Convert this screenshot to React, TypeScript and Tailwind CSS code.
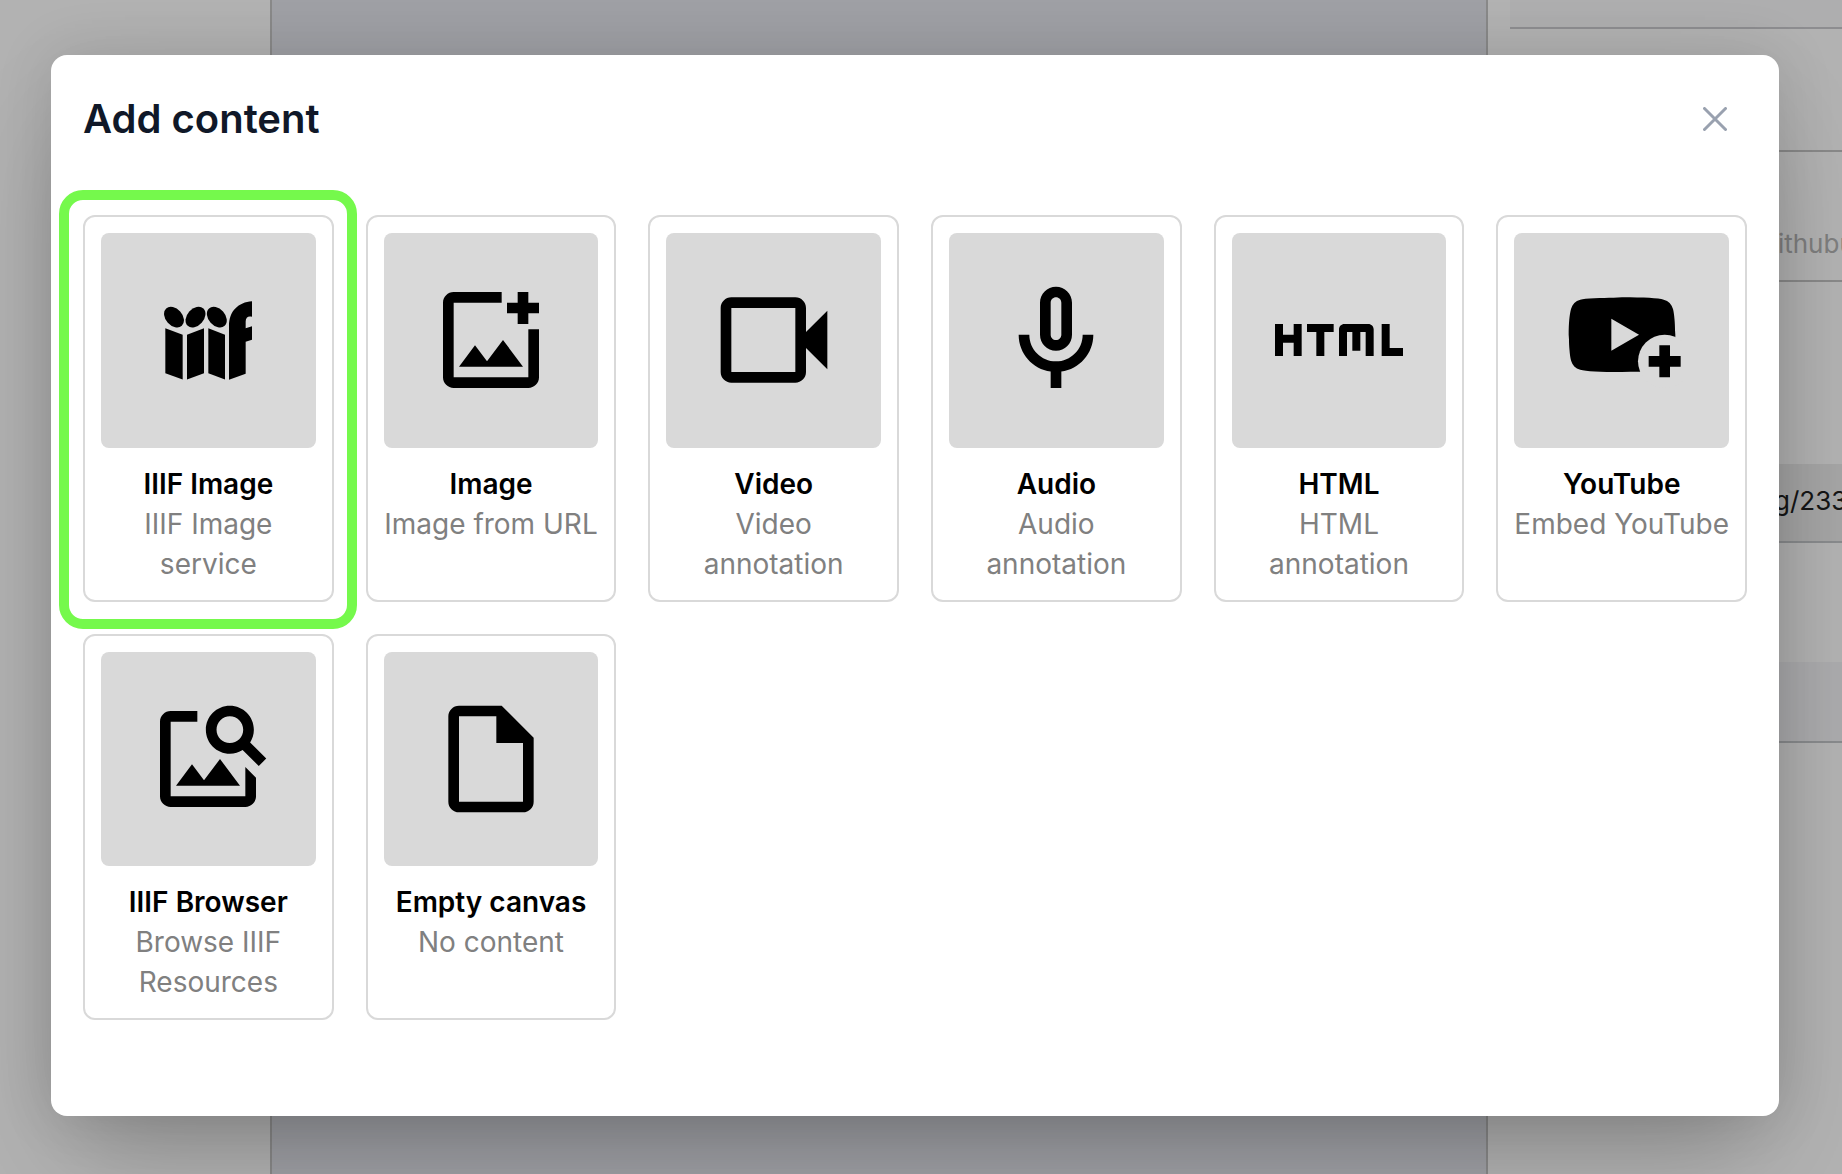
import type { ReactNode } from "react";
import { MdHtml } from "react-icons/md";

function Glyph({ children }: { children: ReactNode }) {
  return (
    <svg viewBox="0 0 24 24" className="size-32" fill="currentColor" fillRule="evenodd" aria-hidden="true">
      {children}
    </svg>
  );
}

function IiifLogo() {
  return (
    <svg viewBox="222 245 264 236" className="h-[79px] w-[88px]" fill="currentColor" aria-hidden="true">
      <ellipse cx="252" cy="293" rx="35" ry="25" transform="rotate(48 252 293)" />
      <ellipse cx="316.500" cy="293" rx="35" ry="25" transform="rotate(-48 316.500 293)" />
      <ellipse cx="380.500" cy="293" rx="35" ry="25" transform="rotate(48 380.500 293)" />
      <path d="M226 326l52 20v134l-52-19z" />
      <path d="M342 326l-51 20v134l51-19z" />
      <path d="M355 326l50 20v134l-50-19z" />
      <path d="M486 245v47c-11-4-19 2-19 14v20l19-6v41l-19 6v96l-50 18V320c0-46 28-72 69-75z" />
    </svg>
  );
}

function AddImageIcon() {
  return (
    <Glyph>
      <path d="M5 3h9v2H5v14h14v-9h2v9c0 1.100-.9 2-2 2H5c-1.100 0-2-.9-2-2V5c0-1.100.9-2 2-2z" />
      <path d="M17 3h2v2h2v2h-2v2h-2V7h-2V5h2zM9 13l2.250 3 3-4L18 17H6z" />
    </Glyph>
  );
}

function VideoIcon() {
  return (
    <Glyph>
      <path d="M4 4h12c1.100 0 2 .9 2 2v4.500l4-4v11l-4-4V18c0 1.100-.9 2-2 2H4c-1.100 0-2-.9-2-2V6c0-1.100.9-2 2-2zm0 2v12h12V6z" />
    </Glyph>
  );
}

function MicIcon() {
  return (
    <Glyph>
      <path d="M12 2c1.660 0 3 1.340 3 3v6c0 1.660-1.340 3-3 3s-3-1.340-3-3V5c0-1.660 1.340-3 3-3zm0 2c-.55 0-1 .45-1 1v6c0 .55.45 1 1 1s1-.45 1-1V5c0-.55-.45-1-1-1z" />
      <path d="M17 11c0 2.760-2.240 5-5 5s-5-2.240-5-5H5c0 3.530 2.610 6.430 6 6.920V21h2v-3.080c3.390-.49 6-3.390 6-6.920z" />
    </Glyph>
  );
}

function YouTubeAddIcon() {
  return (
    <Glyph>
      <path
        transform="translate(0 -1)"
        d="M10,15L15.190,12L10,9V15M21.560,7.170C21.690,7.640 21.780,8.270 21.840,9.070C21.910,9.870 21.940,10.560 21.940,11.160L22,12C22,14.190 21.840,15.800 21.560,16.830C21.310,17.730 20.730,18.310 19.830,18.560C19.360,18.690 18.500,18.780 17.180,18.840C15.880,18.910 14.690,18.940 13.590,18.940L12,19C7.810,19 5.200,18.840 4.170,18.560C3.270,18.310 2.690,17.730 2.440,16.830C2.310,16.360 2.220,15.730 2.160,14.930C2.090,14.130 2.060,13.440 2.060,12.840L2,12C2,9.810 2.160,8.200 2.440,7.170C2.690,6.270 3.270,5.690 4.170,5.440C4.640,5.310 5.500,5.220 6.820,5.160C8.120,5.090 9.310,5.060 10.410,5.060L12,5C16.190,5 18.800,5.160 19.830,5.440C20.730,5.690 21.310,6.270 21.560,7.170Z"
      />
      <circle cx="20" cy="16" r="5" className="fill-[#d9d9d9]" />
      <path d="M19 13h2v2h2v2h-2v2h-2v-2h-2v-2h2z" />
    </Glyph>
  );
}

function SearchImageIcon() {
  return (
    <Glyph>
      <path d="M5 3h5v2H5v14h14v-5.500l2 2V19c0 1.100-.9 2-2 2H5c-1.100 0-2-.9-2-2V5c0-1.100.9-2 2-2z" />
      <path d="M9 13l2.250 3 3-4L18 17H6z" />
      <path d="M19.900 8.890c.44-.7.7-1.510.7-2.390C20.600 4.010 18.590 2 16.100 2s-4.500 2.010-4.500 4.500S13.610 11 16.100 11c.88 0 1.700-.26 2.390-.7l3.030 3.020 1.400-1.420zM16.100 9c-1.380 0-2.500-1.120-2.500-2.500S14.720 4 16.100 4s2.500 1.120 2.500 2.500S17.480 9 16.100 9z" />
    </Glyph>
  );
}

function FileIcon() {
  return (
    <Glyph>
      <path d="M6 2h8l6 6v12c0 1.100-.9 2-2 2H6c-1.100 0-2-.9-2-2V4c0-1.100.9-2 2-2zm0 2v16h12V9h-5V4z" />
    </Glyph>
  );
}

type Item = { title: string; detail: string; icon: ReactNode; highlighted?: boolean };

const items: Item[] = [
  { title: "IIIF Image", detail: "IIIF Image service", icon: <IiifLogo />, highlighted: true },
  { title: "Image", detail: "Image from URL", icon: <AddImageIcon /> },
  { title: "Video", detail: "Video annotation", icon: <VideoIcon /> },
  { title: "Audio", detail: "Audio annotation", icon: <MicIcon /> },
  { title: "HTML", detail: "HTML annotation", icon: <MdHtml className="size-32" aria-hidden="true" /> },
  { title: "YouTube", detail: "Embed YouTube", icon: <YouTubeAddIcon /> },
  { title: "IIIF Browser", detail: "Browse IIIF Resources", icon: <SearchImageIcon /> },
  { title: "Empty canvas", detail: "No content", icon: <FileIcon /> },
];

function ContentCard({ title, detail, icon, highlighted }: Item) {
  return (
    <button type="button" className="relative flex flex-col rounded-xl border-2 border-[#d9d9d9] p-4 text-center text-[28px] leading-10">
      <span className="mb-4 flex aspect-square w-full items-center justify-center rounded-lg bg-[#d9d9d9] text-black">{icon}</span>
      <span className="w-full font-semibold text-black">{title}</span>
      <span className="w-full text-[#808080]">{detail}</span>
      {highlighted && (
        <span className="pointer-events-none absolute -top-[27px] -right-[25px] -bottom-[29px] -left-[26px] rounded-3xl border-[10px] border-[#75f94c]" />
      )}
    </button>
  );
}

function Workspace() {
  return (
    <div className="absolute inset-0 flex overflow-hidden bg-white" aria-hidden="true">
      <div className="w-[270px] shrink-0" />
      <div className="flex-1 border-x-2 border-[#c4c4c4] bg-[#e4e5ed]" />
      <div className="w-[354px] shrink-0 pl-[22px] text-[26px]">
        <div className="h-[29px] border-b-2 border-[#cbcbce] bg-[#f9f9fb]" />
        <div className="h-[123px] border-b-2 border-[#c4c4c4]" />
        <input readOnly tabIndex={-1} value="githubusercontent" aria-label="Source" className="mt-[58px] block h-[72px] w-full border-b-2 border-[#c4c4c4] pb-1 pl-[252px] text-[#b5b5b5]" />
        <input readOnly tabIndex={-1} value="g/2332" aria-label="Identifier" className="mt-[182px] block h-[79px] w-full border-b-2 border-[#c5c7cb] bg-[#ececec] pb-1 pl-[264px] text-[#202020]" />
        <div className="mt-[119px] h-[81px] border-b-2 border-[#c5c7cb] bg-[#f5f5f8]" />
      </div>
      <div className="absolute inset-0 bg-black/30" />
    </div>
  );
}

export default function App() {
  return (
    <main className="relative min-h-screen font-['Inter',sans-serif]">
      <Workspace />
      <div className="relative flex min-h-screen items-start overflow-hidden py-[55px] pr-[63px] pl-[51px]">
        <section
          role="dialog"
          aria-modal="true"
          aria-labelledby="dialog-title"
          className="w-full rounded-2xl bg-white px-8 pt-8 pb-24 shadow-[0_50px_100px_-24px_rgba(0,0,0,0.25),0_0_60px_0_rgba(0,0,0,0.12)]"
        >
          <header className="mb-16 flex items-center justify-between">
            <h1 id="dialog-title" className="text-[40px] leading-[64px] font-semibold text-gray-900">Add content</h1>
            <button type="button" aria-label="Close" className="flex size-16 items-center justify-center text-gray-400">
              <svg viewBox="0 0 24 24" className="size-6" fill="none" stroke="currentColor" strokeWidth="3" strokeLinecap="round" aria-hidden="true">
                <path d="M1.500 1.500l21 21M22.500 1.500l-21 21" />
              </svg>
            </button>
          </header>
          <div className="grid grid-cols-6 gap-8">
            {items.map((item) => (
              <ContentCard key={item.title} {...item} />
            ))}
          </div>
        </section>
      </div>
    </main>
  );
}
